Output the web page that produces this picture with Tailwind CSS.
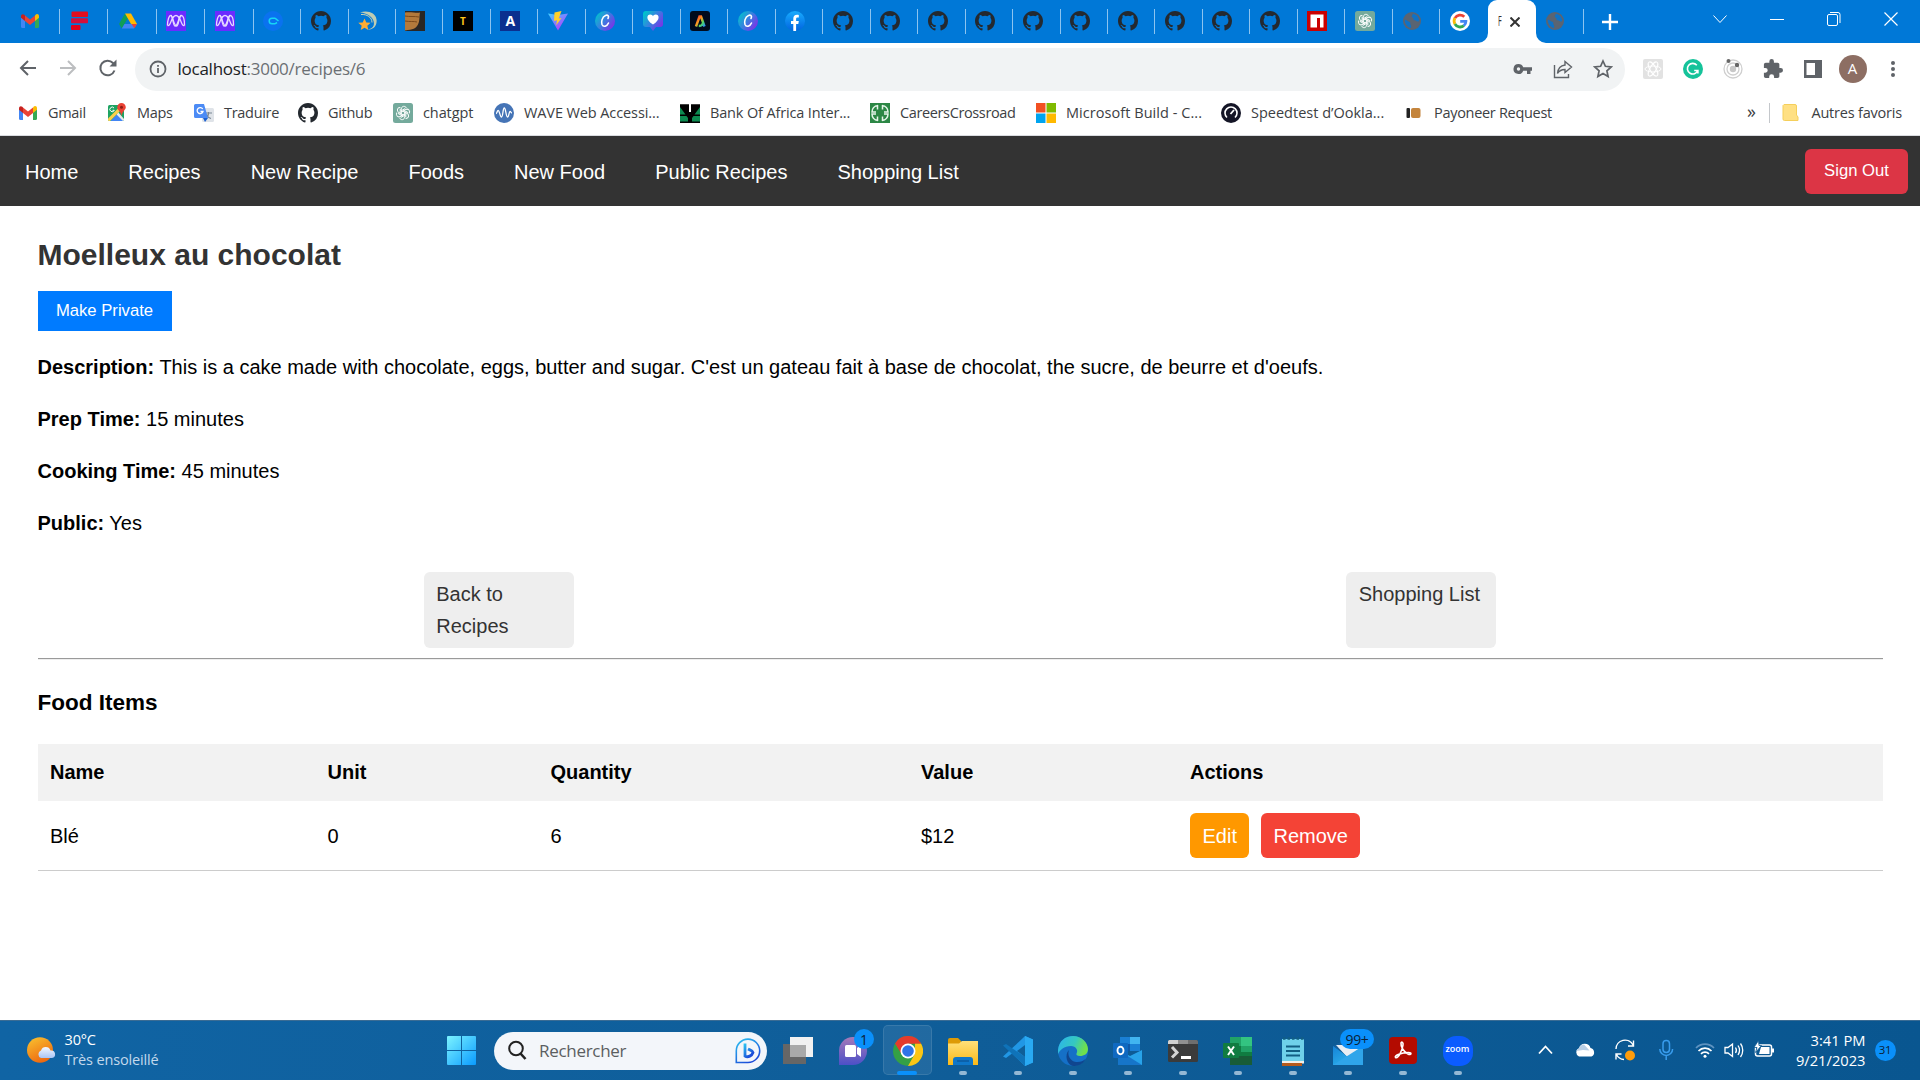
<!DOCTYPE html>
<html lang="fr">
<head>
<meta charset="utf-8">
<title>Recipe</title>
<script src="https://cdn.jsdelivr.net/npm/@tailwindcss/browser@4"></script>
</head>
<body class="w-[1920px] h-[1080px] overflow-hidden bg-white flex flex-col font-['Liberation_Sans',Arial,sans-serif] text-black">

<!-- Shared icons -->
<svg class="absolute" width="0" height="0">
  <defs>
    <linearGradient id="gCanva" x1="0" y1="0.2" x2="1" y2="0.9"><stop offset="0" stop-color="#00c4cc"/><stop offset=".45" stop-color="#3a7fe0"/><stop offset="1" stop-color="#8b20e8"/></linearGradient>
    <linearGradient id="gVite" x1="0" y1="0" x2=".7" y2="1"><stop offset="0" stop-color="#41d1ff"/><stop offset="1" stop-color="#bd34fe"/></linearGradient>
    <linearGradient id="gAdobe" x1="0" y1="0" x2="1" y2="1"><stop offset="0" stop-color="#e33"/><stop offset=".4" stop-color="#ff9a1f"/><stop offset=".7" stop-color="#4cd964"/><stop offset="1" stop-color="#2b8cff"/></linearGradient>
    <linearGradient id="gWin" gradientUnits="userSpaceOnUse" x1="0" y1="0" x2="29" y2="29"><stop offset="0" stop-color="#7cf3ff"/><stop offset="1" stop-color="#0a9bff"/></linearGradient>
    <linearGradient id="gSun" x1="0" y1="0" x2=".5" y2="1"><stop offset="0" stop-color="#f9c531"/><stop offset="1" stop-color="#ee6a10"/></linearGradient>
    <linearGradient id="gChat" x1="0" y1="0" x2="0" y2="1"><stop offset="0" stop-color="#a67ab8"/><stop offset="1" stop-color="#4b50c8"/></linearGradient>
    <linearGradient id="gFold" x1="0" y1="0" x2="0" y2="1"><stop offset="0" stop-color="#ffe07a"/><stop offset="1" stop-color="#fbb917"/></linearGradient>
    <linearGradient id="gEdge" x1="0" y1="0" x2="1" y2=".3"><stop offset="0" stop-color="#2bb3ee"/><stop offset=".6" stop-color="#35c8c0"/><stop offset="1" stop-color="#6fe04c"/></linearGradient>
    <linearGradient id="gBing" x1="0" y1="0" x2=".6" y2="1"><stop offset="0" stop-color="#2bc4f2"/><stop offset="1" stop-color="#1b4ad8"/></linearGradient>
    <linearGradient id="gMail" x1="0" y1="0" x2="1" y2="1"><stop offset="0" stop-color="#1583d8"/><stop offset="1" stop-color="#35c1f1"/></linearGradient>
    <linearGradient id="gFb" x1="0" y1="0" x2="0" y2="1"><stop offset="0" stop-color="#18acfe"/><stop offset="1" stop-color="#0163e0"/></linearGradient>
    <linearGradient id="gCloud" x1="0" y1="0" x2="0" y2="1"><stop offset="0" stop-color="#f4f8ff"/><stop offset="1" stop-color="#a9c4f5"/></linearGradient>

    <symbol id="gmail" viewBox="0 0 20 20"><path fill="#4285f4" d="M1 5v10.500a1.500 1.500 0 0 0 1.500 1.500H5V9z"/><path fill="#34a853" d="M15 17h2.500a1.500 1.500 0 0 0 1.500-1.500V5l-4 4z"/><path fill="#fbbc04" d="M15 4.500V10l4-3.200V5.200C19 3.200 17 2.500 15.600 3.700z"/><path fill="#ea4335" d="M5 10V4.500l5 4 5-4V10l-5 3.900z"/><path fill="#c5221f" d="M1 5.200v1.600L5 10V4.500l-.7-.7C3 2.600 1 3.300 1 5.200z"/></symbol>
    <symbol id="fred" viewBox="0 0 20 20"><rect x="1.500" y=".5" width="16.500" height="5.500" rx="1" fill="#e30d1e"/><rect x="1" y="7.200" width="17" height="5" rx="1" fill="#d30f3b"/><rect x="1" y="14" width="9.500" height="5" rx="1" fill="#e3001b"/></symbol>
    <symbol id="drive" viewBox="0 0 20 20"><path fill="#0f9d58" d="M7 2.500 1 13l2.800 4.500L10 7z"/><path fill="#ffba00" d="M7 2.500h6L19 13h-6z"/><path fill="#4285f4" d="M6.500 13H19l-3 4.500H3.800z"/><path fill="#ea4335" d="M13.500 13H19l-2.600 4.200z"/></symbol>
    <symbol id="mesh" viewBox="0 0 20 20"><path fill="#6b2bff" d="M0 0h20v20H0z"/><g fill="none" stroke="#e6d9ff" stroke-width="1.300"><path d="M1.500 14.500C1.500 9 3 4.500 4.800 4.500S8 15 10.500 15s2.200-10.500 4.700-10.500c2 0 3.300 4.500 3.300 10"/><path d="M1.500 14.500c3.500 1.500 3.500-10 8.500-10s5 11.500 8.500 10"/><path d="M4.800 4.500c2.500 0 1.700 10.500 4.500 10.500s3.500-10.500 6-10.500"/></g></symbol>
    <symbol id="cblue" viewBox="0 0 20 20"><circle cx="10" cy="10" r="10" fill="#0a72ef"/><path d="M12 7.200H9a2.800 2.800 0 0 0 0 5.600h3M12 7.200 15.500 10M12 12.800 14 11.500" fill="none" stroke="#16d5f5" stroke-width="1.500"/></symbol>
    <symbol id="github" viewBox="0 0 16 16"><path fill="#24292f" d="M8 0C3.580 0 0 3.580 0 8c0 3.540 2.290 6.530 5.470 7.590.4.070.55-.17.55-.38 0-.19-.01-.82-.01-1.490-2.010.37-2.530-.49-2.690-.94-.09-.23-.48-.94-.82-1.130-.28-.15-.68-.52-.01-.53.63-.01 1.080.58 1.230.82.72 1.210 1.870.87 2.330.66.07-.52.28-.87.51-1.070-1.780-.2-3.640-.89-3.640-3.950 0-.87.31-1.590.82-2.150-.08-.2-.36-1.020.08-2.120 0 0 .67-.21 2.200.82a7.600 7.600 0 0 1 4 0c1.530-1.040 2.200-.82 2.200-.82.44 1.100.16 1.920.08 2.120.51.56.82 1.270.82 2.150 0 3.070-1.870 3.750-3.650 3.950.29.25.54.73.54 1.480 0 1.070-.01 1.930-.01 2.200 0 .21.15.46.55.38A8.010 8.010 0 0 0 16 8c0-4.420-3.580-8-8-8z"/></symbol>
    <symbol id="dizzy" viewBox="0 0 20 20"><path d="M2 1.500c8-2.500 15.500.5 16.500 7s-4 10.500-9 10c5-.5 7.500-4 6-8.500S9 2 2 1.500z" fill="#ffe8a6" opacity=".75"/><path d="M3 3.500c6-.5 11 3 11 8" fill="none" stroke="#ffe8a6" stroke-width=".8"/><path fill="#ffac33" d="m6.500 7.500 1.800 4 4.300.3-3.300 2.900 1.100 4.300-3.900-2.300L2.700 19l1-4.300L.3 11.800l4.400-.3z"/></symbol>
    <symbol id="photo" viewBox="0 0 20 20"><path fill="#2a2725" d="M0 0h20v20H0z"/><path fill="#b37a3c" d="M0 1.500c6-1 12 1 15 0-1 5 0 8-2 12s-5 5-13 6z"/><path d="M0 5c5 1 9 0 14 1M0 10c5 1 9 0 12 1" stroke="#7c4a1c" fill="none"/></symbol>
    <symbol id="vite" viewBox="0 0 20 20"><path fill="url(#gVite)" d="M0 2.500 10 19.500 20 2.500 10 4z"/><path fill="#ffd028" d="M13.500 0 6.500 1.500 6 10l3-.7-.8 5L13.500 7l-2.800.5z"/></symbol>
    <symbol id="canva" viewBox="0 0 20 20"><circle cx="10" cy="10" r="10" fill="url(#gCanva)"/><path d="M13 7.500c1.500-2.500-.5-4-2.500-3C7 6 6 11 7 13.500c1.300 3 5 2 6.500-1.500" fill="none" stroke="#fff" stroke-width="1.600" stroke-linecap="round"/></symbol>
    <symbol id="heart" viewBox="0 0 20 20"><path fill="url(#gCanva)" d="M3 0h14a3 3 0 0 1 3 3v10a3 3 0 0 1-3 3h-4l-3 4-3-4H3a3 3 0 0 1-3-3V3a3 3 0 0 1 3-3z"/><path fill="#fff" d="M10 13.500C2 8.500 4 3.500 7.200 3.500c1.500 0 2.400.8 2.800 1.700.4-.9 1.300-1.700 2.800-1.700C16 3.500 18 8.500 10 13.500z"/></symbol>
    <symbol id="adobe" viewBox="0 0 20 20"><rect width="20" height="20" rx="3" fill="#000b1d"/><path d="M6 15.500 9.500 5.500h1.500l3.500 10M8.800 15c2.500 0 4-1 4.200-3" fill="none" stroke="url(#gAdobe)" stroke-width="2.500"/></symbol>
    <symbol id="fb" viewBox="0 0 20 20"><circle cx="10" cy="10" r="10" fill="url(#gFb)"/><path fill="#fff" d="M8.300 20v-7H6V10h2.300V7.800c0-2.700 1.300-4 3.700-4 .8 0 1.500.1 1.800.2v2.500h-1.200c-1.200 0-1.500.7-1.500 1.500v2h2.700l-.5 3h-2.200v7z"/></symbol>
    <symbol id="npm" viewBox="0 0 20 20"><path fill="#cb0000" d="M0 0h20v20H0z"/><path fill="#fff" d="M3.500 3.500h13v13H13V7h-3v9.500H3.500z"/></symbol>
    <symbol id="gpt" viewBox="0 0 20 20"><rect width="20" height="20" rx="2.500" fill="#74aa9c"/><g fill="none" stroke="#fff" stroke-width="1"><g id="petals"><path id="petal" d="M8.300 11V6.200c0-3.200 3.900-3.900 5.100-1.200M8.300 7.700l3.900-2.200"/><use href="#petal" transform="rotate(60 10 10)"/><use href="#petal" transform="rotate(120 10 10)"/></g><use href="#petals" transform="rotate(180 10 10)"/></g></symbol>
    <symbol id="globe" viewBox="0 0 20 20"><circle cx="10" cy="10" r="9" fill="#5a6472"/><path fill="#0f72c6" d="M2.800 8.500c2 0 3 2.500 5 2.500 1.500 1-.5 2 1 3 .8 1 .2 1.500.2 3C5.500 16.500 2.500 13 2.800 8.500zM10.500 2.800c1 1-1.500 2-.5 3.200s2 1 1.500 2.500 2 .5 3 1.500 1.500.5 2.700 0c0-4-3-7-6.700-7.200z"/></symbol>
    <symbol id="google" viewBox="0 0 20 20"><circle cx="10" cy="10" r="10" fill="#fff"/><g fill="none" stroke-width="2.800"><path stroke="#ea4335" d="M4.900 7.100A6 6 0 0 1 14.300 5.800"/><path stroke="#fbbc05" d="M4.900 7a6.200 6.200 0 0 0 0 6"/><path stroke="#34a853" d="M4.900 13a6 6 0 0 0 9 1.600"/><path stroke="#4285f4" d="M13.800 14.600c1.600-1.300 2.100-2.800 2.100-4.200H10.200"/></g></symbol>
    <symbol id="maps" viewBox="0 0 20 20"><rect x="1" y="2" width="16" height="16" rx="1.500" fill="#1ea362"/><path fill="#e8eaed" d="M11 9l6 7v.5a1.500 1.500 0 0 1-1.500 1.500H15L9.500 12z"/><path fill="#4285f4" d="M9.500 11.500 16 18H3.500z"/><path fill="#fbd04b" d="M1 15.500 12 4.500l1.500 3L3 18h-.5A1.500 1.500 0 0 1 1 16.500z"/><path d="M7 5a2.300 2.300 0 1 0 .3 2.300H5.500" fill="none" stroke="#fff"/><path fill="#ea4335" d="M14.500 0A4.300 4.300 0 0 1 18.800 4.300C18.800 7 15.500 8 14.500 13c-1-5-4.300-6-4.300-8.700A4.300 4.300 0 0 1 14.500 0z"/><circle cx="14.500" cy="4.300" r="1.500" fill="#8c1d14"/></symbol>
    <symbol id="trad" viewBox="0 0 20 20"><rect x="8" y="5" width="12" height="14" rx="1.500" fill="#dfe3e8"/><path d="M11 10h7M14.500 9v1.500c0 2-1.500 4-3 5M12.500 11.500c1 2 2.500 3.500 4.500 4" stroke="#7b8794" fill="none" stroke-width="1.200"/><path fill="#4c8bf5" d="M1.500 1H10l4 14H1.500A1.500 1.500 0 0 1 0 13.500v-11A1.500 1.500 0 0 1 1.500 1z"/><path fill="#1a5fd0" d="M9 15h5l-3 4z"/><path d="M8.700 6A3 3 0 1 0 9 8.500H6.500" fill="none" stroke="#fff" stroke-width="1.300"/></symbol>
    <symbol id="wave" viewBox="0 0 20 20"><circle cx="10" cy="10" r="10" fill="#4574b6"/><path d="M2 10.500c1 0 1-3 2.300-3s1.700 6.500 3.200 6.500S8.800 5 10.300 5s1.700 9 3.200 9 1.500-5.500 2.500-5.500S17 10 18 10" fill="none" stroke="#fff" stroke-width="1.300"/></symbol>
    <symbol id="boa" viewBox="0 0 20 20"><path d="M0 0h20v20H0z"/><path fill="#0d8a50" d="M0 13h6.500l1.500 2v3.500H0zM20 13h-6.500L12 15v3.500h8zM0 4l5.500 7.500H0zM20 4l-5.500 7.500H20z"/><path fill="#fff" d="M0 0h20v1.200h-9V9H9V1.200H0z"/></symbol>
    <symbol id="careers" viewBox="0 0 20 20"><path fill="#2c8745" d="M0 0h20v20H0z"/><path d="M8 2.500C4 3 2 6 2 9h4M8 17.500C4 17 2 14 2 11h4M12 2.500c4 .5 6 3.500 6 6.500h-4M12 17.500c4-.5 6-3.500 6-6.500h-4M7.500 2v4.500M12.500 2v4.500M7.500 13.500V18M12.500 13.500V18" fill="none" stroke="#e6f5ea" stroke-width="1.500"/></symbol>
    <symbol id="ms" viewBox="0 0 20 20"><path fill="#f25022" d="M0 0h9.500v9.500H0z"/><path fill="#7fba00" d="M10.500 0H20v9.500h-9.500z"/><path fill="#00a4ef" d="M0 10.500h9.500V20H0z"/><path fill="#ffb900" d="M10.500 10.500H20V20h-9.500z"/></symbol>
    <symbol id="speed" viewBox="0 0 20 20"><circle cx="10" cy="10" r="10" fill="#141526"/><path d="M6 14.500a6 6 0 1 1 8 0" fill="none" stroke="#fff" stroke-width="1.600"/><path d="m9.500 11 3.500-4" stroke="#fff" stroke-width="1.800"/></symbol>
    <symbol id="payo" viewBox="0 0 20 20"><rect x="2.500" y="5" width="3.500" height="10" rx="1" fill="#222"/><rect x="7" y="5" width="9.500" height="10" rx="2" fill="#c4843c"/></symbol>
  </defs>
</svg>

<!-- Tab strip -->
<header class="h-[43px] bg-[#0078d7] flex shrink-0 font-['Open_Sans',sans-serif]">
  <div id="tabs" class="flex items-center pb-px"></div>
  <div class="relative w-[48px] h-[43px] bg-white rounded-t-[9px] flex items-center pl-[10px] text-[#333]">
    <svg class="absolute bottom-0 -left-[10px]" width="10" height="10"><path fill="#fff" d="M10 0v10H0A10 10 0 0 0 10 0z"/></svg>
    <svg class="absolute bottom-0 -right-[10px]" width="10" height="10"><path fill="#fff" d="M0 0v10h10A10 10 0 0 1 0 0z"/></svg>
    <span class="w-[12.500px] text-[14px] leading-[20px] origin-left scale-x-50 -mt-px">F</span>
    <svg width="10" height="10" stroke="#333" stroke-width="2"><path d="m.5.5 9 9M9.500.5l-9 9"/></svg>
  </div>
  <div class="w-[48px] h-[43px] flex items-center pl-[9px] pb-px"><svg width="20" height="20"><use href="#globe"/></svg><span class="ml-auto w-px h-[25px] bg-[#8cc4f0]"></span></div>
  <div class="flex items-center pl-[18.500px] flex-1">
    <svg width="16" height="16" stroke="#fff" stroke-width="2.400"><path d="M8 0v16M0 8h16"/></svg>
    <div class="ml-auto flex items-center gap-[43px] pr-[22px] pb-[5px]">
      <svg width="14" height="14" fill="none" stroke="#fff"><path d="m.5 3.500 6.500 7 6.500-7"/></svg>
      <svg width="14" height="14" stroke="#fff"><path d="M0 7.500h14"/></svg>
      <svg width="14" height="14" fill="none" stroke="#fff"><rect x=".5" y="2.500" width="10" height="11" rx="1.500"/><path d="M3 .5h8a2 2 0 0 1 2 2v8.500"/></svg>
      <svg width="14" height="14" stroke="#fff" stroke-width="1.200"><path d="m.5.5 13 13M13.500.5l-13 13"/></svg>
    </div>
  </div>
</header>

<!-- Address bar -->
<div class="h-[48px] pt-[5px] flex shrink-0 font-['Open_Sans',sans-serif]">
  <div class="w-[135px] flex items-center pl-[17.500px] gap-[20px] pb-[3px]">
    <svg width="20" height="20" fill="none" stroke="#5f6368" stroke-width="2"><path d="M18 10H3M10 3l-7 7 7 7"/></svg>
    <svg width="20" height="20" fill="none" stroke="#bcbec0" stroke-width="2"><path d="M2 10h15M10 3l7 7-7 7"/></svg>
    <svg width="20" height="20" fill="none" stroke="#5f6368" stroke-width="2"><path d="M16.500 12.500A7.300 7.300 0 1 1 15 5l1.500 1.500"/><path fill="#5f6368" stroke="none" d="M18.500 1.500v7h-7z"/></svg>
  </div>
  <div class="w-[1490px] h-[43px] rounded-full bg-[#f1f3f4] flex items-center pl-[13.500px] pr-[12px] pb-px">
    <svg width="18" height="18" fill="none" stroke="#5f6368" stroke-width="1.800"><circle cx="9" cy="9" r="7.500"/><path d="M9 8v5M9 5v1.800"/></svg>
    <span class="ml-[11px] text-[17px] tracking-[-0.25px] text-[#6b6f73]"><span class="text-[#202124]">localhost</span>:3000/recipes/6</span>
    <div class="ml-auto flex items-center gap-[20px]">
      <svg width="20" height="20" fill="#5f6368"><path fill-rule="evenodd" d="M5.500 5a5 5 0 0 1 4.700 3.300H19v3.400h-1.500V15H14v-3.300h-3.800A5 5 0 1 1 5.500 5zm0 3.300a1.700 1.700 0 1 0 0 3.400 1.700 1.700 0 0 0 0-3.400z"/></svg>
      <svg width="20" height="20" fill="none" stroke="#5f6368" stroke-width="1.400"><path d="M1.500 6v12.500h14V15"/><path d="M12 2.500 18.500 8 12 13.500v-3c-4 0-6 1.500-7.500 4C5 9.500 7.500 6.500 12 6z"/></svg>
      <svg width="20" height="20" fill="none" stroke="#5f6368" stroke-width="1.700"><path d="m10 2 2.400 5.300 5.800.6-4.300 3.900 1.200 5.700-5.100-3-5.100 3 1.200-5.700L1.800 7.900l5.800-.6z"/></svg>
    </div>
  </div>
  <div class="flex items-center gap-[20px] pl-[17.500px] pb-[2px]">
    <svg width="20" height="20" class="shrink-0"><rect width="20" height="20" rx="2" fill="#e2e2e2"/><g fill="none" stroke="#fff"><ellipse cx="10" cy="10" rx="8" ry="3"/><ellipse cx="10" cy="10" rx="8" ry="3" transform="rotate(60 10 10)"/><ellipse cx="10" cy="10" rx="8" ry="3" transform="rotate(120 10 10)"/></g></svg>
    <svg width="20" height="20" class="shrink-0"><circle cx="10" cy="10" r="10" fill="#15c39a"/><path d="M13.800 6.300a5.300 5.300 0 1 0 .9 5.200h-3.500M14.900 11v3.500" fill="none" stroke="#fff" stroke-width="1.600"/></svg>
    <svg width="20" height="20" class="shrink-0" fill="none" stroke="#cfcfcf" stroke-width="1.300"><circle cx="10" cy="10" r="9"/><circle cx="10" cy="10" r="6"/><circle cx="10" cy="10" r="3.200" fill="#c8c8c8" stroke="none"/><circle cx="5.500" cy="2" r="2" fill="#666" stroke="none"/><circle cx="14" cy="6" r="2.200" fill="#666" stroke="none"/></svg>
    <svg width="20" height="20" class="shrink-0" viewBox="1 1 22 22" fill="#5f6368"><path d="M20.500 11H19V7a2 2 0 0 0-2-2h-4V3.500a2.500 2.500 0 0 0-5 0V5H4a2 2 0 0 0-2 2v3.800h1.500a2.700 2.700 0 0 1 0 5.400H2V20a2 2 0 0 0 2 2h3.800v-1.500a2.700 2.700 0 0 1 5.400 0V22H17a2 2 0 0 0 2-2v-4h1.500a2.500 2.500 0 0 0 0-5z"/></svg>
    <svg width="20" height="20" class="shrink-0"><path fill="#5f6368" fill-rule="evenodd" d="M1 1h18v18H1zM3.500 4v12H12V4z"/></svg>
    <div class="-mx-[4px] size-[28px] shrink-0 rounded-full bg-[#8d6e63] text-white text-[15px] flex items-center justify-center">A</div>
    <svg width="20" height="20" class="shrink-0" fill="#5f6368"><circle cx="10" cy="4" r="2"/><circle cx="10" cy="10" r="2"/><circle cx="10" cy="16" r="2"/></svg>
  </div>
</div>

<!-- Bookmarks -->
<div class="h-[45px] shrink-0 border-b border-[#dadce0] flex items-center pl-[18px] pr-[18px] font-['Open_Sans',sans-serif] text-[14.5px] text-[#3c4043] whitespace-nowrap">
  <div id="marks" class="flex"></div>
  <span class="ml-auto mr-[13px] text-[18px] leading-none pb-[5px]">»</span>
  <span class="w-px h-[20px] bg-[#c4c7cb] mr-[12.500px]"></span>
  <svg width="18" height="20" class="mr-[11px]"><path fill="#ffe083" stroke="#f5cf5b" d="M2 1.500h11a1.500 1.500 0 0 1 1.500 1.500v9l1.500 2v3.500H2.500A1.500 1.500 0 0 1 1 16V2.500z"/></svg>
  <span class="tracking-[-0.2px]">Autres favoris</span>
</div>

<!-- Site navigation -->
<nav class="h-[70px] shrink-0 bg-[#333] text-white text-[20px] flex items-center pl-[25px] pr-[12px] pt-px gap-[50px]">
  <a>Home</a><a>Recipes</a><a>New Recipe</a><a>Foods</a><a>New Food</a><a>Public Recipes</a><a>Shopping List</a>
  <button class="ml-auto w-[103px] h-[45px] -mt-px pb-[2px] rounded-[6px] bg-[#dc3545] text-[16.67px]">Sign Out</button>
</nav>

<main class="flex-1 px-[37.5px] pt-[24.500px] text-[20px] leading-[32px]">
  <h1 class="text-[30px] leading-[48px] font-bold text-[#333]">Moelleux au chocolat</h1>
  <button class="block mt-[12.500px] w-[134px] h-[40px] bg-[#007bff] text-white text-[16.67px] leading-[40px]">Make Private</button>
  <p class="mt-[20px]"><strong>Description:</strong> This is a cake made with chocolate, eggs, butter and sugar. C'est un gateau fait à base de chocolat, the sucre, de beurre et d'oeufs.</p>
  <p class="mt-[20px]"><strong>Prep Time:</strong> 15 minutes</p>
  <p class="mt-[20px]"><strong>Cooking Time:</strong> 45 minutes</p>
  <p class="mt-[20px]"><strong>Public:</strong> Yes</p>
  <div class="mt-[33px] flex justify-around text-[#333]">
    <a class="w-[150px] h-[76px] rounded-[6px] bg-[#eee] px-[12.500px] py-[6px]">Back to Recipes</a>
    <a class="w-[150px] h-[76px] rounded-[6px] bg-[#eee] px-[12.500px] py-[6px]">Shopping List</a>
  </div>
  <hr class="mt-[10px] h-[2px] border-t border-b border-t-[#9a9a9a] border-b-[#eee]">
  <h3 class="mt-[25px] text-[22.500px] leading-[36px] font-bold">Food Items</h3>
  <table class="mt-[23px] w-full table-fixed text-left">
    <colgroup><col class="w-[277.500px]"><col class="w-[223px]"><col class="w-[370.500px]"><col class="w-[269px]"><col></colgroup>
    <thead><tr class="h-[57px] bg-[#f2f2f2]"><th class="px-[12.500px] pb-[2px]">Name</th><th class="px-[12.500px] pb-[2px]">Unit</th><th class="px-[12.500px] pb-[2px]">Quantity</th><th class="px-[12.500px] pb-[2px]">Value</th><th class="px-[12.500px] pb-[2px]">Actions</th></tr></thead>
    <tbody><tr class="h-[69.500px] border-b border-[#ccc]"><td class="px-[12.500px]">Blé</td><td class="px-[12.500px]">0</td><td class="px-[12.500px]">6</td><td class="px-[12.500px]">$12</td>
      <td class="px-[12.500px]"><div class="flex gap-[11.500px] text-white"><a class="rounded-[6px] bg-[#ff9800] px-[12.500px] py-[6.500px]">Edit</a><a class="rounded-[6px] bg-[#f44336] px-[12.500px] py-[6.500px]">Remove</a></div></td></tr></tbody>
  </table>
</main>

<!-- Taskbar -->
<footer class="h-[60px] shrink-0 border-t border-[#3b6c94] bg-linear-to-r from-[#1064a4] via-[#0f5d98] to-[#095690] flex items-center text-white font-['Open_Sans',sans-serif] text-[14.500px]">
  <div class="w-[447px] flex items-center pl-[27px] pb-[2px]">
    <svg width="29" height="28"><ellipse cx="13" cy="14" rx="13" ry="12.800" fill="url(#gSun)"/><path fill="url(#gCloud)" d="M14 22a4 4 0 0 1 0-7.500 5 5 0 0 1 9.500 0A3.800 3.800 0 0 1 25 22z"/></svg>
    <div class="ml-[8.500px] leading-[20px] tracking-[-0.15px]"><div>30°C</div><div class="text-[#c3d9ec]">Très ensoleillé</div></div>
  </div>
  <svg width="29" height="29" viewBox="0 0 29 29" fill="url(#gWin)"><path d="M1 0h13v14H0V1a1 1 0 0 1 1-1zM15 0h13a1 1 0 0 1 1 1v13H15zM0 15h14v14H1a1 1 0 0 1-1-1zM15 15h14v13a1 1 0 0 1-1 1H15z"/></svg>
  <div class="ml-[18px] w-[273px] h-[38px] rounded-full bg-[#f3f6fa] flex items-center pl-[13px] pr-[6px] text-[#5b5e61] text-[17px] tracking-[-0.3px]">
    <svg width="21" height="21" fill="none" stroke="#222" stroke-width="2"><circle cx="9" cy="8.500" r="6.800"/><path d="m13.500 13.500 5 5.500" stroke-width="2.600"/></svg>
    <span class="ml-[11px]">Rechercher</span>
    <svg class="ml-auto" width="26" height="26" fill="none"><path d="M1.300 24.500V13A11.700 11.700 0 1 1 13 24.500z" stroke="url(#gBing)" stroke-width="1.600"/><path d="M10 5.500v12.500c3 2 7-.5 8-3.500-.5-2-3-2.500-5-3.500" stroke="url(#gBing)" stroke-width="2.800"/></svg>
  </div>
  <div id="apps" class="ml-[3px] flex"></div>
  <div class="ml-[50px] pb-px flex items-center">
    <svg width="20" height="20" fill="none" stroke="#fff" stroke-width="1.800"><path d="m4 13.500 6.500-7 6.500 7"/></svg>
    <svg class="ml-[20px]" width="20" height="20"><path fill="#fff" d="M4 16.500a4.500 4.500 0 0 1 0-8.300A6 6 0 0 1 15.500 8a4.500 4.500 0 0 1 1 8.500z"/><path fill="#b9cfe6" d="M1.300 11A4.500 4.500 0 0 1 4 8.200 6 6 0 0 1 9 4.500l5.500 6L8 10z"/></svg>
    <svg class="ml-[20px]" width="21" height="22" fill="none" stroke="#fff" stroke-width="1.400"><path d="M1 10A9 9 0 0 1 18 6M18.500 1.500V7H13M1 20.500V15h5.500M1.500 15.500A9 9 0 0 0 9 20.500"/><circle cx="15" cy="16.500" r="5" fill="#ff9c0b" stroke="none"/></svg>
    <svg class="ml-[21.500px]" width="16" height="22" fill="none" stroke="#389ced" stroke-width="1.500"><rect x="5" y="1.500" width="6.500" height="12" rx="3.200"/><path d="M1.800 10a6.400 6.400 0 0 0 12.800 0M8.200 16.500V21"/></svg>
    <svg class="ml-[21px]" width="20" height="20" fill="none" stroke="#fff" stroke-width="1.700"><path stroke="#5f93c0" d="M1 8a12.500 12.500 0 0 1 18 0"/><path d="M3.500 11a9 9 0 0 1 13 0M6 13.800a5.500 5.500 0 0 1 8 0"/><circle cx="10" cy="16.300" r="1.500" fill="#fff" stroke="none"/></svg>
    <svg class="ml-[9.500px]" width="20" height="20" fill="none" stroke="#fff" stroke-width="1.300"><path d="M1 7.500h3L8.500 4v12.500L4 13H1zM11.500 7.500c1 1.500 1 4 0 5.500M14 5.500c2 3 2 6.500 0 9.500M16.500 3.500c3 4 3 9.500 0 13.500"/></svg>
    <svg class="ml-[9.500px]" width="21" height="20" fill="none" stroke="#fff" stroke-width="1.500"><rect x="1.500" y="5" width="16" height="11" rx="2"/><path d="M19 8.500v4" stroke-width="2"/><path fill="#fff" stroke="none" d="M7 7h8.500v7H5z"/><path fill="#fff" stroke="#0b5791" stroke-width=".8" d="M4.500.5 0 7.500h3l-1.500 5L7.500 5.500H5z"/></svg>
  </div>
  <div class="ml-auto pb-[2px] text-right leading-[20px] text-[14.700px]"><div>3:41 PM</div><div>9/21/2023</div></div>
  <div class="ml-[9px] mr-[24.500px] mb-px size-[21px] rounded-full bg-[#0a90fb] text-[#0b2238] text-[11.500px] flex items-center justify-center tracking-tight">31</div>
</footer>

<script>
  const icon = id => `<svg width="20" height="20" class="shrink-0"><use href="#${id}"/></svg>`;
  const letter = (ch, cls) => `<span class="size-[20px] flex items-center justify-center font-bold leading-none ${cls}">${ch}</span>`;
  const tabs = [icon('gmail'), icon('fred'), icon('drive'), icon('mesh'), icon('mesh'), icon('cblue'), icon('github'), icon('dizzy'), icon('photo'),
    letter('T', 'bg-black text-[#ffc61a] text-[10px]'), letter('A', 'bg-[#0b2f8f] text-white text-[14px]'), icon('vite'), icon('canva'), icon('heart'), icon('adobe'), icon('canva'), icon('fb'),
    ...Array(10).fill(icon('github')), icon('npm'), icon('gpt'), icon('globe'), icon('google')];
  document.getElementById('tabs').innerHTML = tabs.map((t, i) => {
    const w = i === 0 ? 60 : i < 5 ? 48.4 : 47.48;
    const last = i === tabs.length - 1;
    return `<div class="flex items-center shrink-0 ${i === 0 ? 'pl-[20px]' : 'pl-[9.500px]'}" style="width:${w}px">${t}${last ? '' : '<span class="ml-auto w-px h-[25px] bg-[#8cc4f0]"></span>'}</div>`;
  }).join('');

  const tight = 'tracking-[-0.3px]';
  const marks = [['gmail', 'Gmail', 89, tight], ['maps', 'Maps', 87, tight], ['trad', 'Traduire', 104, tight], ['github', 'Github', 95, tight], ['gpt', 'chatgpt', 101, 'tracking-[-0.1px]'], ['wave', 'WAVE Web Accessi...', 186, 'tracking-[-0.1px]'],
    ['boa', 'Bank Of Africa Inter...', 190, 'tracking-[-0.15px]'], ['careers', 'CareersCrossroad', 166, 'tracking-[-0.37px]'], ['ms', 'Microsoft Build - C...', 185, 'tracking-[0.05px]'], ['speed', 'Speedtest d’Ookla...', 183, 'tracking-[0px]'], ['payo', 'Payoneer Request', 150, tight]];
  document.getElementById('marks').innerHTML = marks.map(([id, t, w, cls]) =>
    `<div class="flex items-center gap-[10px] shrink-0 ${cls}" style="width:${w}px">${icon(id)}<span>${t}</span></div>`).join('');

  const art = {
    view: '<path fill="#666" d="M0 8h23v20H0z"/><path fill="#f1f1f1" d="M7 1h23v20H7z"/><path fill="#a9a9a9" d="M7 9h16v12H7z"/>',
    chat: '<path fill="url(#gChat)" d="M15 1a14 14 0 0 1 0 28H1V15A14 14 0 0 1 15 1z"/><rect x="7" y="9" width="11" height="12" rx="1.500" fill="#fff"/><path fill="#fff" d="m19 12 4-3v12l-4-3z"/>',
    chrome: '<circle cx="15" cy="15" r="15" fill="#34a045"/><path fill="#e53a2c" d="M2 7.500A15 15 0 0 1 28 7.500H15L8.500 18z"/><path fill="#fcc516" d="M28 7.500A15 15 0 0 1 15 30l6.500-11.500L22 7.500z"/><path fill="#e53a2c" d="M15 7.500h13l-.5-1H13z"/><circle cx="15" cy="15" r="7.500" fill="#fff"/><circle cx="15" cy="15" r="5.800" fill="#2f74e8"/>',
    files: '<path fill="#dd9a06" d="M0 4a2 2 0 0 1 2-2h8l3 3v5H0z"/><path fill="url(#gFold)" d="M0 7.500h11l3-2.500h16v24H0z"/><path fill="#0f77c9" d="M5 29v-5a3 3 0 0 1 3-3h14a3 3 0 0 1 3 3v5z"/><path stroke="#0a4d8a" d="M9 25h12"/>',
    code: '<path fill="#2197e5" d="M22 0l8 3.500v23L22 30 9 17.500 3 22 0 20.500 20 2z"/><path fill="#0f73b9" d="M3 8 0 9.500 22 30V21z"/><path fill="#29a9f2" d="M22 0l8 3.500v23L22 30z"/><path fill="#0f5f99" d="M22 9v12l-8-6z"/>',
    edge: '<circle cx="15" cy="15" r="15" fill="#1570c7"/><path fill="url(#gEdge)" d="M0 14C1 5 7 0 15 0c9 0 15 7 15 13 0 5-4 7-8 7-3 0-4-1-3.500-2.500 2-3-.5-7.500-5.500-7.500C6 10 2 14 0 18z"/><path fill="#10468f" d="M11 14c-2 5 1 11 7 12 4 .5 7-1 9.500-3-3 6-8 7-12.500 7C9 29 6 19 11 14z"/>',
    outlook: '<path fill="#1a7fd4" d="M7 1h20v14H7z"/><path fill="#41b4f0" d="M17 1h10v7H17z"/><path fill="#0f58a8" d="M7 8h10v7H7z"/><path fill="#28a3ea" d="M5 14l12 6 12-6v15H5z"/><path fill="#1675c9" d="M5 14v15h24z"/><rect y="7" width="15" height="15" rx="1" fill="#0f69c1"/><ellipse cx="7.500" cy="14.500" rx="3" ry="3.700" fill="none" stroke="#fff" stroke-width="1.900"/>',
    term: '<rect y="4" width="30" height="22" rx="1.500" fill="#3b3b3b"/><path fill="#d2d2d2" d="M0 8V5.500A1.500 1.500 0 0 1 1.500 4H10v4z"/><path fill="#909090" d="M10 4h10v4H10z"/><path fill="#6e6e6e" d="M20 4h8.500A1.500 1.500 0 0 1 30 5.500V8H20z"/><path fill="none" stroke="#d6d6d6" stroke-width="3" d="m4 11 5 5.500-5 5"/><path fill="#fff" d="M13 20h10v3H13z"/>',
    excel: '<path fill="#21a366" d="M7 1h11v9H7z"/><path fill="#33c481" d="M18 1h11v9H18z"/><path fill="#107c41" d="M7 10h22v10H7z"/><path fill="#185c37" d="M7 20h22v9H7z"/><path fill="#21a366" d="M18 10h11v6H18z"/><rect y="7" width="16" height="15" rx="1" fill="#107c41"/><path d="m5 10.500 6 8.500M11 10.500 5 19" stroke="#fff" stroke-width="2"/>',
    notes: '<path fill="#6fd1ea" d="M4 3h22v24H4z"/><path fill="#f2efe8" d="M4 25h22v2.500H4z"/><path fill="#b45a1c" d="M4 27h20v3H4z"/><path stroke="#125f83" stroke-width="1.800" d="M8 10.500h14M8 15h14M8 19.500h14"/><path stroke="#125f83" stroke-width="2.500" stroke-dasharray="2.500 2" d="M5 2.500h21"/>',
    mail: '<path fill="#14609f" d="M0 10 15 2l15 8v4H0z"/><path fill="#e8eef4" d="M3 9h24v6l-12 7z"/><path fill="url(#gMail)" d="M0 10l15 11L30 10v19H0z"/><path fill="#2fa5ea" d="M0 29 30 10v19z"/>',
    acro: '<rect x="1" y="1" width="28" height="27" rx="4" fill="#b30b00"/><path d="M7.500 21.500c-1.500-2 6-5 13-5 4 0 2.500 3-.5 1.500-4-2-7.500-7-7-11 .5-1.500 2.500-1 2 2-.7 5-4.500 14-7.500 12.500z" fill="none" stroke="#fff" stroke-width="1.600"/>',
    zoom: '<rect width="30" height="30" rx="13" fill="#0b5cff"/>'
  };
  const dot = '<span class="absolute top-[50px] left-[24px] w-[8px] h-[4px] rounded-full bg-[#94b8d4]"></span>';
  const extra = {
    chat: '<span class="absolute top-[8px] left-[29px] w-[20px] h-[20px] rounded-full bg-[#0a90fb] text-[#0b2238] text-[14px] flex items-center justify-center">1</span>',
    mail: '<span class="absolute top-[8px] left-[20px] w-[34px] h-[20px] rounded-full bg-[#0a90fb] text-[#0b2238] text-[14px] tracking-tight flex items-center justify-center">99+</span>' + dot,
    chrome: '<span class="absolute top-[50px] left-[17px] w-[20px] h-[4px] rounded-full bg-[#0a90fb]"></span>',
    zoom: '<span class="absolute inset-x-0 top-[22px] text-center text-[9px] leading-[12px] font-semibold">zoom</span>' + dot,
    view: ''
  };
  document.getElementById('apps').innerHTML = Object.keys(art).map(k =>
    `<div class="relative w-[55px] h-[59px] flex items-center justify-center">${k === 'chrome' ? '<span class="absolute top-[4px] left-[3px] w-[49px] h-[50px] rounded-[5px] bg-white/8 border border-white/10"></span>' : ''}<svg width="30" height="30" class="relative">${art[k]}</svg>${k in extra ? extra[k] : dot}</div>`).join('');
</script>
</body>
</html>
